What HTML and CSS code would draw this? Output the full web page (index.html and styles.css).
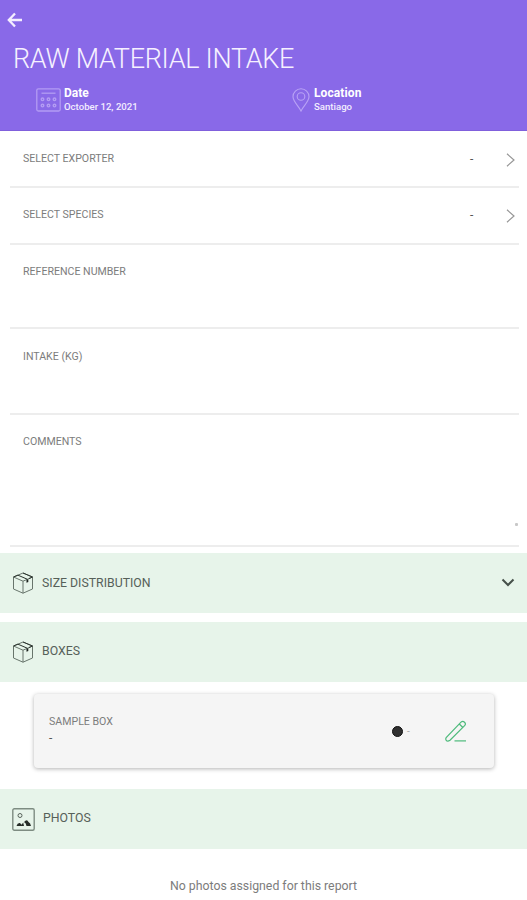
FILE: index.html
```html
<!DOCTYPE html>
<html lang="en">
<head>
<meta charset="utf-8">
<title>Raw Material Intake</title>
<link rel="stylesheet" href="styles.css">
</head>
<body>
<svg class="defs" width="0" height="0" aria-hidden="true">
  <symbol id="box" viewBox="0 0 22 22">
    <path d="M11 1 20.500 5v12L11 21.200 1.500 17V5z M1.500 5 11 9.200 20.500 5M11 9.200v12" fill="none" stroke="#68756c" stroke-width="1"/>
    <path d="M1.500 5 6 3.100M6 3.200l9 3.900M11 1l9.500 4-3.500 1.600" fill="none" stroke="#2b332e" stroke-width="1"/>
    <path d="M14.500 7.700 16.300 7v3l-1.800.7z" fill="#1b211d"/>
  </symbol>
</svg>
<header class="header">
  <svg class="back" viewBox="0 0 16 16"><path d="M15 8H2M8 1.500 1.800 8 8 14.500" fill="none" stroke="#f4edff" stroke-width="2.300"/></svg>
  <h1 class="title">RAW MATERIAL INTAKE</h1>
  <div class="meta">
    <div class="meta-item">
      <svg class="calendar" viewBox="0 0 25 24" fill="none" stroke="#b39cf3" stroke-width="1.300">
        <rect x=".8" y=".8" width="23.400" height="22.200" rx="1.500"/>
        <path d="M5.500 5.200h14"/>
        <g stroke-width="1.400"><circle cx="6.500" cy="11.300" r="1.300"/><circle cx="12.500" cy="11.300" r="1.300"/><circle cx="18.500" cy="11.300" r="1.300"/><circle cx="6.500" cy="17.600" r="1.300"/><circle cx="12.500" cy="17.600" r="1.300"/><circle cx="18.500" cy="17.600" r="1.300"/></g>
      </svg>
      <div><div class="meta-label">Date</div><div class="meta-value">October 12, 2021</div></div>
    </div>
    <div class="meta-item">
      <svg class="pin" viewBox="0 0 18 24" fill="none" stroke="#b9a3f5" stroke-width="1.100">
        <path d="M9 23C7 18.500 1 13.500 1 8.800a8 8 0 0 1 16 0C17 13.500 11 18.500 9 23z"/><circle cx="9" cy="8.500" r="3.800"/>
      </svg>
      <div><div class="meta-label location">Location</div><div class="meta-value">Santiago</div></div>
    </div>
  </div>
</header>
<main>
  <div class="form">
    <div class="row select"><span class="label">SELECT EXPORTER</span><span class="dash">-</span><svg class="chevron" viewBox="0 0 9 14"><path d="M1 .8 8 7l-7 6.200" fill="none" stroke="#969696" stroke-width="1.200"/></svg></div>
    <div class="row select species-row"><span class="label">SELECT SPECIES</span><span class="dash">-</span><svg class="chevron" viewBox="0 0 9 14"><path d="M1 .8 8 7l-7 6.200" fill="none" stroke="#969696" stroke-width="1.200"/></svg></div>
    <div class="row reference"><span class="label">REFERENCE NUMBER</span></div>
    <div class="row intake"><span class="label">INTAKE (KG)</span></div>
    <div class="row comments"><span class="label">COMMENTS</span><i class="grip"></i></div>
  </div>
  <section class="band size">
    <svg class="icon"><use href="#box"/></svg><h2>SIZE DISTRIBUTION</h2>
    <svg class="down" viewBox="0 0 14 9"><path d="M1.500 1.500 7 7l5.500-5.500" fill="none" stroke="#46504a" stroke-width="2"/></svg>
  </section>
  <section class="band boxes"><svg class="icon"><use href="#box"/></svg><h2>BOXES</h2></section>
  <article class="card">
    <div class="sample"><div class="label">SAMPLE BOX</div><div class="sample-value">-</div></div>
    <i class="dot"></i><span class="tiny">-</span>
    <svg class="edit" viewBox="0 0 22 22" fill="none" stroke="#4dba7b" stroke-width="1.200">
      <path d="M1.500 20.800Q.2 19.500 1.200 17.500L16 2.200q1.700-1.700 3.500 0 1.800 1.700.1 3.400L5 20.200q-2 1.500-3.500.6zM14.300 4l3.600 3.500"/><path d="M9.500 20.900H21"/>
    </svg>
  </article>
  <section class="band photos">
    <svg class="photo" viewBox="0 0 23 23">
      <rect x=".8" y=".8" width="21.400" height="21.400" rx="1.500" fill="none" stroke="#7e8c82" stroke-width="1.400"/>
      <circle cx="8" cy="7.500" r="2" fill="none" stroke="#59645c"/>
      <path d="M4.500 18q1-3.500 3.500-3l1.500 1.800 1.700-2.300.8 3.500zM12 14q3-3.500 4.500 0 2 1 2.500 4h-4.500l-.8-2.500z" fill="#252c27"/>
    </svg><h2>PHOTOS</h2>
  </section>
  <p class="empty">No photos assigned for this report</p>
</main>
</body>
</html>
```

FILE: styles.css
```css
* { box-sizing: border-box; }
body { margin: 0; width: 527px; height: 900px; overflow: hidden; background: #fff; font-family: Roboto, "Liberation Sans", sans-serif; }
svg { display: block; flex: none; }
.defs { position: absolute; }
.header { height: 131px; background: #8969e8; border-bottom: 1px solid #8060dc; color: #fff; padding: 12px 0 0 7px; }
.back { width: 16px; height: 16px; }
.title { margin: 15px 0 0 6px; font-size: 27px; line-height: 33px; font-weight: 300; letter-spacing: -.3px; white-space: nowrap; color: #f6f1ff; }
.meta { display: grid; grid-template-columns: 256px 1fr; padding: 10px 0 0 29px; }
.meta-item { display: flex; gap: 3px; }
.meta-item + .meta-item { gap: 4px; }
.calendar { width: 25px; height: 24px; margin-top: 2px; }
.pin { width: 18px; height: 24px; margin-top: 2px; }
.meta-label { font-size: 12px; line-height: 14px; font-weight: 700; }
.location { letter-spacing: .1px; }
.meta-value { font-size: 9.6px; line-height: 14px; font-weight: 500; color: #f3edff; }
.form { margin: 0 8px 0 10px; }
.row { display: flex; align-items: flex-start; padding: 20px 4px 0 13px; border-bottom: 2px solid #ededed; }
.select { height: 57px; }
.select .label { margin-top: 1px; }
.species-row { height: 57px; padding-top: 19px; }
.reference { height: 84px; }
.intake { height: 86px; padding-top: 21px; }
.comments { height: 132px; padding-right: 0; }
.label { font-size: 10.6px; line-height: 14px; color: #7c7c7c; white-space: nowrap; }
.dash { margin-left: auto; width: 36px; color: #555; font-size: 12px; line-height: 16px; }
.chevron { width: 9px; height: 14px; margin-top: 2px; }
.grip { width: 3px; height: 3px; margin: 88px 1px 0 auto; background: #c8c8c8; border-radius: 1px; }
.band { height: 60px; display: flex; align-items: center; background: #e7f4ea; padding: 0 12px; }
.band h2 { margin: 0 0 0 8px; font-size: 12.3px; line-height: 16px; font-weight: 400; color: #566059; }
.size { margin-top: 6px; }
.boxes { margin-top: 9px; }
.boxes h2, .photos h2 { margin-top: -2px; }
.icon { width: 22px; height: 22px; }
.down { width: 14px; height: 9px; margin: -2px 0 0 auto; }
.card { margin: 12px 33px 0 34px; height: 74px; border-radius: 4px; background: #f5f5f5; box-shadow: 0 1px 4px rgba(0,0,0,.3); display: flex; align-items: center; padding: 0 27px 0 15px; }
.sample { margin-right: auto; }
.sample-value { font-size: 12px; line-height: 18px; color: #555; }
.dot { width: 11px; height: 11px; border-radius: 50%; border: 1px solid #111; background: #303030; }
.tiny { width: 42px; padding-left: 4px; font-size: 10px; color: #aaa; }
.edit { width: 22px; height: 22px; }
.photos { margin-top: 21px; }
.photo { width: 23px; height: 23px; }
.empty { margin: 29px 0 0; text-align: center; font-size: 12.3px; line-height: 16px; color: #7c7c7c; }
```
